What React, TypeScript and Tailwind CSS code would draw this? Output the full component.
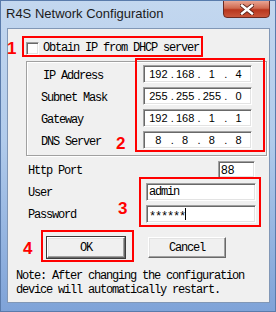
import React from 'react'

const mono = "font-['Liberation_Mono',monospace] text-[12px] leading-[14px] tracking-[-1.2px] text-black"
const digits = "font-['Liberation_Sans',Arial,sans-serif] text-[11px] leading-[14px] text-black"
const sunken =
  'bg-white border border-t-[#a0a0a0] border-l-[#a0a0a0] border-b-white border-r-white shadow-[inset_1px_1px_0_#696969,inset_-1px_-1px_0_#e3e3e3]'
const raised =
  'bg-[#f0f0f0] border border-t-white border-l-white border-b-[#696969] border-r-[#696969] shadow-[inset_-1px_-1px_0_#a0a0a0,inset_1px_1px_0_#e3e3e3]'
const mark = "font-['Liberation_Sans',Arial,sans-serif] font-bold text-[17px] leading-none text-[#ff0000]"

const ipRows = [
  { label: 'IP Address', indent: true, parts: ['192', '168', '1', '4'] },
  { label: 'Subnet Mask', parts: ['255', '255', '255', '0'] },
  { label: 'Gateway', parts: ['192', '168', '1', '1'] },
  { label: 'DNS Server', parts: ['8', '8', '8', '8'] },
]

function IpField({ parts }: { parts: string[] }) {
  return (
    <div className={`${sunken} ${digits} h-[18px] w-[109px] flex items-center pl-[2px]`}>
      {parts.map((p, i) => (
        <React.Fragment key={i}>
          <span className="w-[25px] text-center">{p}</span>
          {i < 3 && <span className="w-[2px]">.</span>}
        </React.Fragment>
      ))}
    </div>
  )
}

export default function App() {
  return (
    <div className="relative w-[276px] h-[312px] overflow-hidden bg-[linear-gradient(180deg,#c3d7ef_0%,#b1cbeb_45%,#7fa3d8_100%)] border border-[#5a7bab]">
      {/* title bar */}
      <div className="flex justify-between items-start h-[27px]">
        <span className="mt-[5px] ml-[5px] font-['Liberation_Sans',Arial,sans-serif] text-[13px] leading-[16px] text-[#1b1b1b]">
          R4S Network Configuration
        </span>
        <div className="shrink-0 mr-[5px] -mt-px w-[47px] h-[18px] rounded-b-[4px] border border-[#6b2a22] bg-[linear-gradient(180deg,#e9a593_0%,#d0694f_45%,#b8361d_55%,#c9553a_100%)] flex items-center justify-center">
          <svg width="14" height="11" viewBox="0 0 14 11">
            <path d="M2 1.5 L12 9.5 M12 1.5 L2 9.5" stroke="#5a2018" strokeWidth="4.2" strokeLinecap="square" />
            <path d="M2 1.5 L12 9.5 M12 1.5 L2 9.5" stroke="#ffffff" strokeWidth="2.4" strokeLinecap="square" />
          </svg>
        </div>
      </div>

      {/* client area */}
      <div className="ml-[6px] mr-[5px] h-[275px] border border-[#8197b6] bg-[#f0f0f0] flex flex-col">
        <div className="mt-[12px] ml-[18px] flex items-center">
          <div className={`${sunken} w-[13px] h-[13px]`} />
          <span className={`${mono} ml-[4px]`}>Obtain IP from DHCP server</span>
        </div>

        <div className="mt-[6px] ml-[18px] w-[241px] h-[95px] border border-[#a0a0a0] shadow-[inset_1px_1px_0_#fff,1px_1px_0_#fff] pt-[3px] pl-[14px]">
          <div className="grid grid-cols-[102px_109px] gap-y-[4px]">
            {ipRows.map((r) => (
              <React.Fragment key={r.label}>
                <span className={`${mono} h-[18px] pt-[4px] ${r.indent ? 'pl-[2px]' : ''}`}>{r.label}</span>
                <IpField parts={r.parts} />
              </React.Fragment>
            ))}
          </div>
        </div>

        <div className="mt-[5px] flex items-center justify-between">
          <span className={`${mono} ml-[20px] pt-[3px]`}>Http Port</span>
          <div className={`${sunken} mr-[14px] w-[37px] h-[17px] flex items-center pl-[2px] font-['Liberation_Sans',Arial,sans-serif] text-[12px] leading-[14px]`}>
            88
          </div>
        </div>

        <div className="mt-[5px] grid grid-cols-[1fr_110px] gap-y-[4px] mr-[13px]">
          <span className={`${mono} ml-[20px] pt-[3px]`}>User</span>
          <div className={`${sunken} ${mono} h-[18px] flex items-center pl-[2px]`}>admin</div>
          <span className={`${mono} ml-[20px] pt-[3px]`}>Password</span>
          <div className={`${sunken} ${mono} h-[18px] flex items-center pl-[2px]`}>
            <span className="translate-y-[3px]">******</span>
            <span className="w-px h-[12px] bg-black" />
          </div>
        </div>

        <div className="mt-[14px] flex">
          <button className={`${raised} ${mono} ml-[39px] w-[78px] h-[21px] outline outline-1 outline-[#3c3c3c]`}>OK</button>
          <button className={`${raised} ${mono} ml-[23px] w-[78px] h-[21px]`}>Cancel</button>
        </div>

        <p className={`${mono} mt-[11px] ml-[8px] leading-[13px]`}>
          Note: After changing the configuration
          <br />
          device will automatically restart.
        </p>
      </div>

      {/* red annotation layer */}
      <span className={`${mark} absolute left-[6px] top-[39px]`}>1</span>
      <div className="absolute left-[21px] top-[35px] w-[181px] h-[21px] border-2 border-[#ff0000]" />
      <div className="absolute left-[134px] top-[57px] w-[130px] h-[94px] border-2 border-[#ff0000]" />
      <span className={`${mark} absolute left-[115px] top-[134px]`}>2</span>
      <div className="absolute left-[138px] top-[176px] w-[122px] h-[50px] border-2 border-[#ff0000]" />
      <span className={`${mark} absolute left-[117px] top-[199px]`}>3</span>
      <div className="absolute left-[40px] top-[229px] w-[93px] h-[32px] border-2 border-[#ff0000]" />
      <span className={`${mark} absolute left-[22px] top-[239px]`}>4</span>
    </div>
  )
}
